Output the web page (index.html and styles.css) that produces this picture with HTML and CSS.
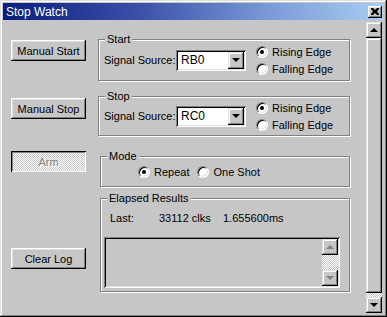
FILE: index.html
```html
<!DOCTYPE html>
<html lang="en">
<head>
    <meta charset="UTF-8">
    <title>Stop Watch</title>
    <link rel="stylesheet" href="styles.css">
</head>
<body>
    <div class="window">
        <div class="titlebar">
            <span class="title">Stop Watch</span>
            <span class="close-btn">
                <svg width="8" height="7" viewBox="0 0 8 7"><path d="M0 0h2l2 2 2-2h2v1l-2 2.5 2 2.5v1h-2l-2-2-2 2h-2v-1l2-2.5-2-2.5z" fill="#000"/></svg>
            </span>
        </div>
        <div class="client">
            <div class="panel">
                <div class="side"><button class="btn">Manual Start</button></div>
                <div class="group start-group">
                    <div class="caption">Start</div>
                    <div class="group-body source-row">
                        <span class="sig-label">Signal Source:</span>
                        <div class="combo"><span class="combo-text">RB0</span><span class="combo-btn"><i class="arrow-down"></i></span></div>
                        <div class="edge-options">
                            <label class="radio-item"><span class="radio checked"></span>Rising Edge</label>
                            <label class="radio-item"><span class="radio"></span>Falling Edge</label>
                        </div>
                    </div>
                </div>

                <div class="side"><button class="btn">Manual Stop</button></div>
                <div class="group stop-group">
                    <div class="caption">Stop</div>
                    <div class="group-body source-row">
                        <span class="sig-label">Signal Source:</span>
                        <div class="combo"><span class="combo-text">RC0</span><span class="combo-btn"><i class="arrow-down"></i></span></div>
                        <div class="edge-options">
                            <label class="radio-item"><span class="radio checked"></span>Rising Edge</label>
                            <label class="radio-item"><span class="radio"></span>Falling Edge</label>
                        </div>
                    </div>
                </div>

                <div class="side"><button class="btn btn-disabled" disabled>Arm</button></div>
                <div class="group mode-group">
                    <div class="caption">Mode</div>
                    <div class="group-body mode-row">
                        <label class="radio-item"><span class="radio checked"></span>Repeat</label>
                        <label class="radio-item one-shot"><span class="radio"></span>One Shot</label>
                    </div>
                </div>

                <div class="side side-bottom"><button class="btn">Clear Log</button></div>
                <div class="group results-group">
                    <div class="caption">Elapsed Results</div>
                    <div class="last-row">
                        <span class="last-label">Last:</span>
                        <span class="last-clks">33112 clks</span>
                        <span>1.655600ms</span>
                    </div>
                    <div class="log-box">
                        <div class="log-text"></div>
                        <div class="log-scroll">
                            <span class="scroll-btn disabled"><i class="arrow-up gray"></i></span>
                            <span class="scroll-track"></span>
                            <span class="scroll-btn disabled"><i class="arrow-down gray"></i></span>
                        </div>
                    </div>
                </div>
            </div>
            <div class="vscroll">
                <span class="scroll-btn"><i class="arrow-up"></i></span>
                <span class="scroll-thumb"></span>
                <span class="scroll-track"></span>
                <span class="scroll-btn"><i class="arrow-down"></i></span>
            </div>
        </div>
    </div>
</body>
</html>
```

FILE: styles.css
```css
body {
    margin: 0;
    padding: 0;
    font-family: "Liberation Sans", Arial, sans-serif;
    font-size: 11px;
    color: #000;
    background: #c6c6c6;
}

.window {
    width: 387px;
    height: 317px;
    box-sizing: border-box;
    padding: 3px 5px 3px 3px;
    background: #c6c6c6;
    box-shadow: inset -1px -1px #000, inset 1px 1px #dfdfdf, inset -2px -2px #808080, inset 2px 2px #fff;
    display: flex;
    flex-direction: column;
}

/* title bar */
.titlebar {
    height: 17px;
    margin-right: -2px;
    background: linear-gradient(to right, #0a1e7e, #3850a8 35%, #7a9ad8 70%, #a8cef2);
    display: flex;
    align-items: center;
    justify-content: space-between;
}
.title {
    color: #fff;
    padding-left: 3px;
    font-size: 12px;
}
.close-btn {
    width: 14px;
    height: 12px;
    margin-right: 2px;
    background: #c6c6c6;
    box-shadow: inset -1px -1px #000, inset 1px 1px #fff, inset -2px -2px #808080, inset 2px 2px #dfdfdf;
    display: flex;
    align-items: center;
    justify-content: center;
}

.client {
    flex: 1;
    display: flex;
}

.panel {
    flex: 1;
    display: grid;
    grid-template-columns: 95px 252px;
    align-content: start;
}

.side {
    padding-left: 8px;
    align-self: center;
}
.side-bottom {
    align-self: end;
    margin-bottom: 23px;
}

/* buttons */
.btn {
    width: 75px;
    height: 21px;
    padding: 0;
    border: none;
    font-family: "Liberation Sans", Arial, sans-serif;
    font-size: 11px;
    color: #000;
    background: #c6c6c6;
    box-shadow: inset -1px -1px #000, inset 1px 1px #fff, inset -2px -2px #808080, inset 2px 2px #dfdfdf;
    display: block;
}
.btn-disabled {
    color: #808080;
    text-shadow: 1px 1px #fff;
    background: repeating-conic-gradient(#fff 0 25%, #c6c6c6 0 50%) 0 0 / 2px 2px;
    box-shadow: inset 1px 1px #000, inset -1px -1px #fff, inset 2px 2px #808080, inset -2px -2px #dfdfdf;
}

/* group boxes */
.group {
    box-sizing: border-box;
    border: 1px solid #808080;
    box-shadow: inset 1px 1px #fff, 1px 1px #fff;
    display: flex;
    flex-direction: column;
}
.caption {
    align-self: flex-start;
    margin: -7px 0 -6px 6px;
    padding: 0 2px;
    height: 13px;
    line-height: 13px;
    background: #c6c6c6;
    position: relative;
}
.group-body {
    flex: 1;
    display: flex;
    align-items: center;
}

.start-group {
    margin-top: 19px;
    height: 42px;
}
.stop-group {
    margin-top: 15px;
    height: 40px;
}
.mode-group {
    margin: 20px 0 0 2px;
    height: 31px;
}
.results-group {
    margin: 11px 0 0 2px;
    height: 94px;
}

.source-row {
    padding-left: 5px;
}
.sig-label {
    width: 72px;
}

/* combo box */
.combo {
    width: 70px;
    height: 21px;
    box-sizing: border-box;
    background: #fff;
    box-shadow: inset 1px 1px #808080, inset -1px -1px #fff, inset 2px 2px #000, inset -2px -2px #dfdfdf;
    display: flex;
    align-items: center;
    justify-content: space-between;
    padding: 2px;
}
.combo-text {
    padding-left: 3px;
    font-size: 12px;
}
.combo-btn {
    width: 16px;
    height: 17px;
    background: #c6c6c6;
    box-shadow: inset -1px -1px #000, inset 1px 1px #dfdfdf, inset -2px -2px #808080, inset 2px 2px #fff;
    display: flex;
    align-items: center;
    justify-content: center;
}

.arrow-down {
    width: 0;
    height: 0;
    border-left: 4px solid transparent;
    border-right: 4px solid transparent;
    border-top: 4px solid #000;
}
.arrow-up {
    width: 0;
    height: 0;
    border-left: 4px solid transparent;
    border-right: 4px solid transparent;
    border-bottom: 4px solid #000;
}
.arrow-up.gray {
    border-bottom-color: #808080;
}
.arrow-down.gray {
    border-top-color: #808080;
}

/* radios */
.edge-options {
    margin-left: 10px;
    display: flex;
    flex-direction: column;
    gap: 4px;
}
.radio-item {
    display: flex;
    align-items: center;
    gap: 4px;
    height: 13px;
}
.radio {
    width: 12px;
    height: 12px;
    box-sizing: border-box;
    border-radius: 50%;
    border: 1px solid;
    border-color: #808080 #fff #fff #808080;
    box-shadow: inset 1px 1px #000, inset -1px -1px #dfdfdf;
    background: #fff;
    display: flex;
    align-items: center;
    justify-content: center;
}
.radio.checked::after {
    content: "";
    width: 4px;
    height: 4px;
    border-radius: 50%;
    background: #000;
}

.mode-row {
    padding-left: 37px;
}
.one-shot {
    margin-left: 8px;
}

/* elapsed results */
.last-row {
    display: flex;
    margin: 13px 0 0 9px;
    height: 13px;
    line-height: 13px;
}
.last-label {
    width: 49px;
}
.last-clks {
    width: 64px;
}

.log-box {
    margin: 12px 0 0 3px;
    width: 236px;
    height: 51px;
    box-sizing: border-box;
    padding: 2px;
    box-shadow: inset 1px 1px #808080, inset -1px -1px #fff, inset 2px 2px #000, inset -2px -2px #dfdfdf;
    display: flex;
}
.log-text {
    flex: 1;
}
.log-scroll {
    width: 16px;
    display: flex;
    flex-direction: column;
}

/* scroll bars */
.scroll-btn {
    height: 16px;
    flex: none;
    background: #c6c6c6;
    box-shadow: inset -1px -1px #000, inset 1px 1px #dfdfdf, inset -2px -2px #808080, inset 2px 2px #fff;
    display: flex;
    align-items: center;
    justify-content: center;
}
.scroll-btn.disabled {
    box-shadow: inset -1px -1px #000, inset 1px 1px #dfdfdf, inset -2px -2px #808080, inset 2px 2px #fff;
}
.scroll-track {
    flex: 1;
    background: repeating-conic-gradient(#fff 0 25%, #c6c6c6 0 50%) 0 0 / 2px 2px;
}
.vscroll {
    width: 16px;
    margin: 2px 0 1px;
    display: flex;
    flex-direction: column;
}
.vscroll .scroll-track {
    flex: 0 0 4px;
}
.scroll-thumb {
    flex: 1;
    background: #c6c6c6;
    box-shadow: inset -1px -1px #000, inset 1px 1px #dfdfdf, inset -2px -2px #808080, inset 2px 2px #fff;
}
```
